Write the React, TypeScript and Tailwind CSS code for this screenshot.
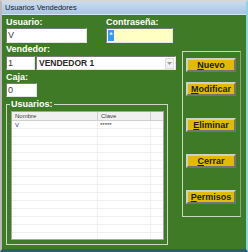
import React from 'react';

const rows = Array.from({ length: 15 });

const Label: React.FC<{ text: string }> = ({ text }) => (
  <div className="h-[11px] leading-[11px] text-[9px] font-bold text-white">{text}</div>
);

const Btn: React.FC<{ first: string; rest: string; mt: string }> = ({ first, rest, mt }) => (
  <button
    className={`${mt} ml-[3px] w-[50px] h-[14px] flex items-center justify-center bg-[#e0bc00] border-2 border-t-[#cfcfcf] border-l-[#cfcfcf] border-b-[#747474] border-r-[#747474] text-[9px] leading-none font-bold text-[#1c1c1c]`}
  >
    <span className="underline">{first}</span>
    {rest}
  </button>
);

export default function App() {
  return (
    <div
      className="w-[248px] h-[252px] flex flex-col border-l-2 border-t-2 border-r-2 border-b-[3px] border-l-[#b9b9b9] border-t-[#d6d6d6] border-r-[#86d9e3] border-b-[#2d5e6c] bg-[#3f7a26]"
      style={{ fontFamily: '"Liberation Sans", Arial, sans-serif' }}
    >
      {/* Title bar */}
      <div className="h-[13px] flex items-center pl-[3px] bg-gradient-to-b from-[#c8dbf1] to-[#aac4e3] border-b border-[#d8e4f0] text-[7.5px] text-[#1a1a1a]">
        Usuarios Vendedores
      </div>

      {/* Body */}
      <div className="flex pl-[4px] pt-[2px]">
        {/* Left column */}
        <div className="w-[170px] flex flex-col">
          <div className="flex">
            <div className="w-[81px]">
              <Label text="Usuario:" />
              <div className="h-[15px] bg-white border border-t-[#7a7a7a] border-l-[#7a7a7a] border-b-[#e4e4e4] border-r-[#e4e4e4] pl-[1px] text-[9px] leading-[13px] text-[#3a3a3a]">
                V
              </div>
            </div>
            <div className="w-[67px] ml-[19px]">
              <Label text="Contraseña:" />
              <div className="h-[15px] flex items-center bg-[#ffffc4] border border-t-[#7a7a7a] border-l-[#7a7a7a] border-b-[#e4e4e4] border-r-[#e4e4e4] pl-[1px]">
                <div className="w-[6px] h-[11px] flex justify-center bg-[#3399ff] text-white text-[9px] leading-[11px]">*</div>
              </div>
            </div>
          </div>

          <div className="mt-[1px]">
            <Label text="Vendedor:" />
          </div>
          <div className="flex mt-[1px] h-[14px]">
            <div className="w-[29px] bg-white border border-t-[#7a7a7a] border-l-[#7a7a7a] border-b-[#e4e4e4] border-r-[#e4e4e4] pl-[1px] text-[9px] leading-[12px] text-[#3a3a3a]">
              1
            </div>
            <div className="ml-[1px] w-[140px] flex bg-white border border-t-[#7a7a7a] border-l-[#7a7a7a] border-b-[#e4e4e4] border-r-[#e4e4e4]">
              <div className="flex-1 pl-[2px] text-[8.5px] leading-[12px] font-bold text-[#2a2a2a]">VENDEDOR 1</div>
              <div className="w-[9px] h-[11px] mt-[0.5px] mr-[1px] bg-[#f2f2f2] border border-[#dcdcdc] flex items-center justify-center">
                <svg width="5" height="3" viewBox="0 0 5 3">
                  <path d="M0 0 L5 0 L2.5 3 Z" fill="#9a9a9a" />
                </svg>
              </div>
            </div>
          </div>

          <div className="mt-[2px]">
            <Label text="Caja:" />
          </div>
          <div className="w-[31px] h-[14px] bg-white border border-t-[#7a7a7a] border-l-[#7a7a7a] border-b-[#e4e4e4] border-r-[#e4e4e4] pl-[1px] text-[9px] leading-[12px] text-[#3a3a3a]">
            0
          </div>

          {/* Usuarios group */}
          <fieldset className="mt-[2px] w-[162px] h-[146px] border border-[#cdd8c4]">
            <legend className="ml-[3px] px-[1px] h-[11px] leading-[11px] text-[9px] font-bold text-white">Usuarios:</legend>
            <div className="ml-[4px] mt-[1px] w-[153px] h-[129px] bg-white border border-[#a4a4a4] overflow-hidden text-[6px]">
              <div className="flex h-[9px] bg-[#f0f0f0] border-b border-[#d0d0d0] leading-[8px] text-[#404040]">
                <div className="w-[86px] pl-[3px] border-r border-[#cfcfcf]">Nombre</div>
                <div className="w-[53px] pl-[3px] border-r border-[#cfcfcf]">Clave</div>
                <div className="flex-1" />
              </div>
              {rows.map((_, i) => (
                <div key={i} className="flex h-[8px] border-b border-[#efefef] leading-[8px]">
                  <div className="w-[86px] pl-[3px] border-r border-[#f2f2f2] text-[#23307a]">{i === 0 ? 'V' : ''}</div>
                  <div className="w-[53px] pl-[2px] border-r border-[#f2f2f2] text-[#303030] text-[6px]">{i === 0 ? '*****' : ''}</div>
                  <div className="flex-1" />
                </div>
              ))}
            </div>
          </fieldset>
        </div>

        {/* Buttons frame */}
        <div className="ml-[6px] mt-[34px] w-[59px] h-[166px] flex flex-col border border-t-[#c9d6c0] border-l-[#c9d6c0] border-b-[#c9d6c0] border-r-[#86a874]">
          <Btn first="N" rest="uevo" mt="mt-[6px]" />
          <Btn first="M" rest="odificar" mt="mt-[10px]" />
          <Btn first="E" rest="liminar" mt="mt-[22px]" />
          <Btn first="C" rest="errar" mt="mt-[22px]" />
          <Btn first="P" rest="ermisos" mt="mt-[22px]" />
        </div>
      </div>
    </div>
  );
}
